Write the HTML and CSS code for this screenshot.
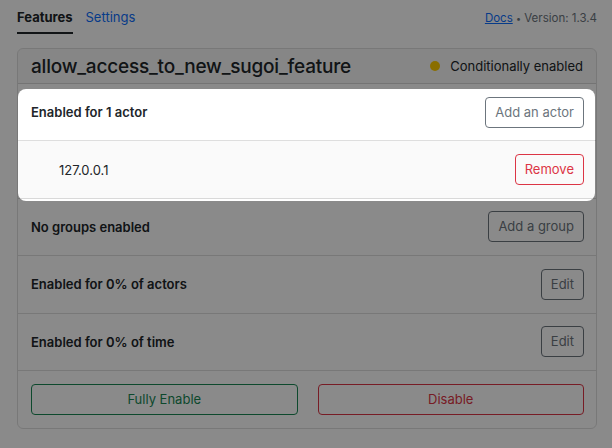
FILE: index.html
```html
<!DOCTYPE html>
<html>
<head>
<meta charset="utf-8">
<link rel="stylesheet" href="styles.css">
</head>
<body>
<div class="page">
  <div class="topbar">
    <nav class="tabs">
      <a class="tab active">Features</a>
      <a class="tab link">Settings</a>
    </nav>
    <div class="meta"><a class="docs">Docs</a> <span class="dot-sep">•</span> Version: 1.3.4</div>
  </div>
  <div class="card">
    <div class="card-header">
      <h1 class="title">allow_access_to_new_sugoi_feature</h1>
      <div class="status"><span class="status-dot"></span><span>Conditionally enabled</span></div>
    </div>
    <div class="row">
      <span class="label">Enabled for 1 actor</span>
      <button class="btn btn-secondary">Add an actor</button>
    </div>
    <div class="row row-item">
      <span class="item">127.0.0.1</span>
      <button class="btn btn-danger">Remove</button>
    </div>
    <div class="row">
      <span class="label">No groups enabled</span>
      <button class="btn btn-secondary">Add a group</button>
    </div>
    <div class="row">
      <span class="label">Enabled for 0% of actors</span>
      <button class="btn btn-secondary">Edit</button>
    </div>
    <div class="row">
      <span class="label">Enabled for 0% of time</span>
      <button class="btn btn-secondary">Edit</button>
    </div>
    <div class="card-footer">
      <button class="btn btn-success wide">Fully Enable</button>
      <button class="btn btn-danger wide">Disable</button>
    </div>
  </div>
</div>
<div class="tour-cutout"></div>
</body>
</html>
```

FILE: styles.css
```css
* { box-sizing: border-box; }
html, body { margin: 0; padding: 0; background: #fff; }
body {
  font-family: Inter, "Noto Sans", "Liberation Sans", sans-serif;
  font-size: 13px;
  color: #212529;
  width: 612px;
  height: 448px;
  overflow: hidden;
}
.page { padding: 0 15px 0 17px; }
.topbar {
  display: flex;
  justify-content: space-between;
  align-items: flex-start;
  height: 34px;
}
.tabs { display: flex; gap: 13px; }
.tab {
  display: block;
  padding: 9px 0 7px;
  line-height: 16px;
  border-bottom: 2px solid transparent;
  text-decoration: none;
}
.tab.active { font-weight: 700; color: #212529; border-bottom-color: #212529; }
.tab.link { color: #0d6efd; }
.meta { padding-top: 10px; line-height: 16px; font-size: 11.5px; color: #6c757d; }
.docs { color: #0d6efd; text-decoration: underline; }
.dot-sep { font-size: 9px; }
.card {
  margin-top: 14px;
  border: 1px solid rgba(0,0,0,.13);
  border-radius: 6px;
  overflow: hidden;
}
.card-header {
  height: 35px;
  display: flex;
  align-items: center;
  justify-content: space-between;
  padding: 0 13px;
  background: rgba(0,0,0,.03);
  border-bottom: 1px solid rgba(0,0,0,.13);
}
.title { margin: 0; font-size: 19px; font-weight: 500; letter-spacing: -0.2px; color: #212529; }
.status { display: flex; align-items: center; gap: 10px; color: #212529; }
.status-dot { width: 10px; height: 10px; border-radius: 50%; background: #ffcc00; }
.row {
  height: 57.4px;
  display: flex;
  align-items: center;
  justify-content: space-between;
  padding: 0 12px 0 13px;
  border-bottom: 1px solid rgba(0,0,0,.13);
  background: #fff;
}
.row-item { background: #fafafa; padding-left: 41px; }
.label { font-weight: 600; }
.item { font-weight: 400; }
.btn {
  font-family: inherit;
  font-size: 13px;
  line-height: 19px;
  padding: 5px 9px;
  border-radius: 4px;
  background: transparent;
  border: 1px solid;
}
.btn-secondary { color: #6c757d; border-color: #6c757d; }
.btn-danger { color: #dc3545; border-color: #dc3545; }
.btn-success { color: #198754; border-color: #198754; }
.card-footer {
  height: 57px;
  display: flex;
  align-items: flex-start;
  gap: 20px;
  padding: 13px 12px 0 13px;
}
.wide { flex: 1; }
.tour-cutout {
  position: absolute;
  left: 18px;
  top: 89px;
  width: 577px;
  height: 112px;
  border-radius: 8px;
  box-shadow: 0 0 0 2000px rgba(0,0,0,.46);
  pointer-events: none;
}
```
